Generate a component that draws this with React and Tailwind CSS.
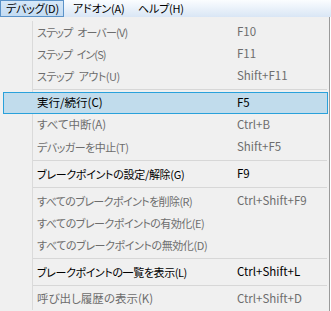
import React from "react";

const rows = [
  { t: "item", label: "ステップ\u2002オーバー(V)", sc: "F10", dis: true, lc: "text-[11px] tracking-[-0.8px]" },
  { t: "item", label: "ステップ\u2002イン(S)", sc: "F11", dis: true, lc: "text-[11px] tracking-[-0.9px]" },
  { t: "item", label: "ステップ\u2002アウト(U)", sc: "Shift+F11", dis: true, lc: "text-[11px] tracking-[-0.5px]" },
  { t: "sep" },
  { t: "item", label: "実行/続行(C)", sc: "F5", hi: true, lc: "text-[11.5px]" },
  { t: "item", label: "すべて中断(A)", sc: "Ctrl+B", dis: true, lc: "text-[11.5px]" },
  { t: "item", label: "デバッガーを中止(T)", sc: "Shift+F5", dis: true, lc: "text-[11px] tracking-[-0.5px]" },
  { t: "sep" },
  { t: "item", label: "ブレークポイントの設定/解除(G)", sc: "F9", lc: "text-[11px] tracking-[-0.3px]" },
  { t: "sep" },
  { t: "item", label: "すべてのブレークポイントを削除(R)", sc: "Ctrl+Shift+F9", dis: true, lc: "text-[11px] tracking-[-0.6px]" },
  { t: "item", label: "すべてのブレークポイントの有効化(E)", sc: "", dis: true, lc: "text-[11px] tracking-[-0.5px]" },
  { t: "item", label: "すべてのブレークポイントの無効化(D)", sc: "", dis: true, lc: "text-[11px] tracking-[-0.4px]" },
  { t: "sep" },
  { t: "item", label: "ブレークポイントの一覧を表示(L)", sc: "Ctrl+Shift+L", lc: "text-[11px] tracking-[-0.4px]" },
  { t: "sep" },
  { t: "item", label: "呼び出し履歴の表示(K)", sc: "Ctrl+Shift+D", dis: true, lc: "text-[11.5px]" },
];

function Row({ r }) {
  if (r.t === "sep") {
    return (
      <div className="flex h-[5px]">
        <div className="w-[33px] shrink-0 border-r border-[#dadada]" />
        <div className="flex-1 mr-[2px] pt-[2px]">
          <div className="h-px bg-[#d7d7d7]" />
        </div>
      </div>
    );
  }
  const color = r.dis ? "text-[#6d6d6d]" : "text-[#000000]";
  const inner = (
    <>
      <span className={`w-[200px] shrink-0 whitespace-nowrap ${r.lc}`}>{r.label}</span>
      <span className="whitespace-nowrap text-[11.5px]">{r.sc}</span>
    </>
  );
  if (r.hi) {
    return (
      <div className={`flex h-[22px] items-center ml-[3px] mr-px border border-[#29a1db] bg-[#c1dcec] pl-[33px] ${color}`}>
        {inner}
      </div>
    );
  }
  return (
    <div className="flex h-[22px]">
      <div className="w-[33px] shrink-0 border-r border-[#dadada]" />
      <div className={`flex items-center pl-[4px] ${color}`}>{inner}</div>
    </div>
  );
}

export default function App() {
  return (
    <div className="w-[331px] h-[311px] bg-white overflow-hidden flex flex-col text-[11px] leading-none [font-feature-settings:'palt'] font-['Noto_Sans_CJK_JP','Noto_Sans',sans-serif]">
      <div className="h-[17px] shrink-0 flex items-stretch bg-gradient-to-b from-[#fbfdff] to-[#d9e6f5] text-[#000] whitespace-nowrap">
        <div className="w-[64px] flex items-center pl-[5px] tracking-[-0.2px] border border-[#5b93c9] bg-gradient-to-b from-[#d6e8f8] to-[#c3dbf2]">
          デバッグ(D)
        </div>
        <div className="flex items-center pl-[9px] w-[74px] tracking-[-0.2px]">アドオン(A)</div>
        <div className="flex items-center tracking-[-0.2px]">ヘルプ(H)</div>
      </div>
      <div className="w-[330px] flex-1 bg-[#f0f0f0] border-r border-[#9a9a9a] pt-[4px] flex flex-col">
        {rows.map((r, i) => (
          <Row key={i} r={r} />
        ))}
        <div className="flex flex-1">
          <div className="w-[33px] shrink-0 border-r border-[#dadada] mb-[4px]" />
        </div>
      </div>
    </div>
  );
}
